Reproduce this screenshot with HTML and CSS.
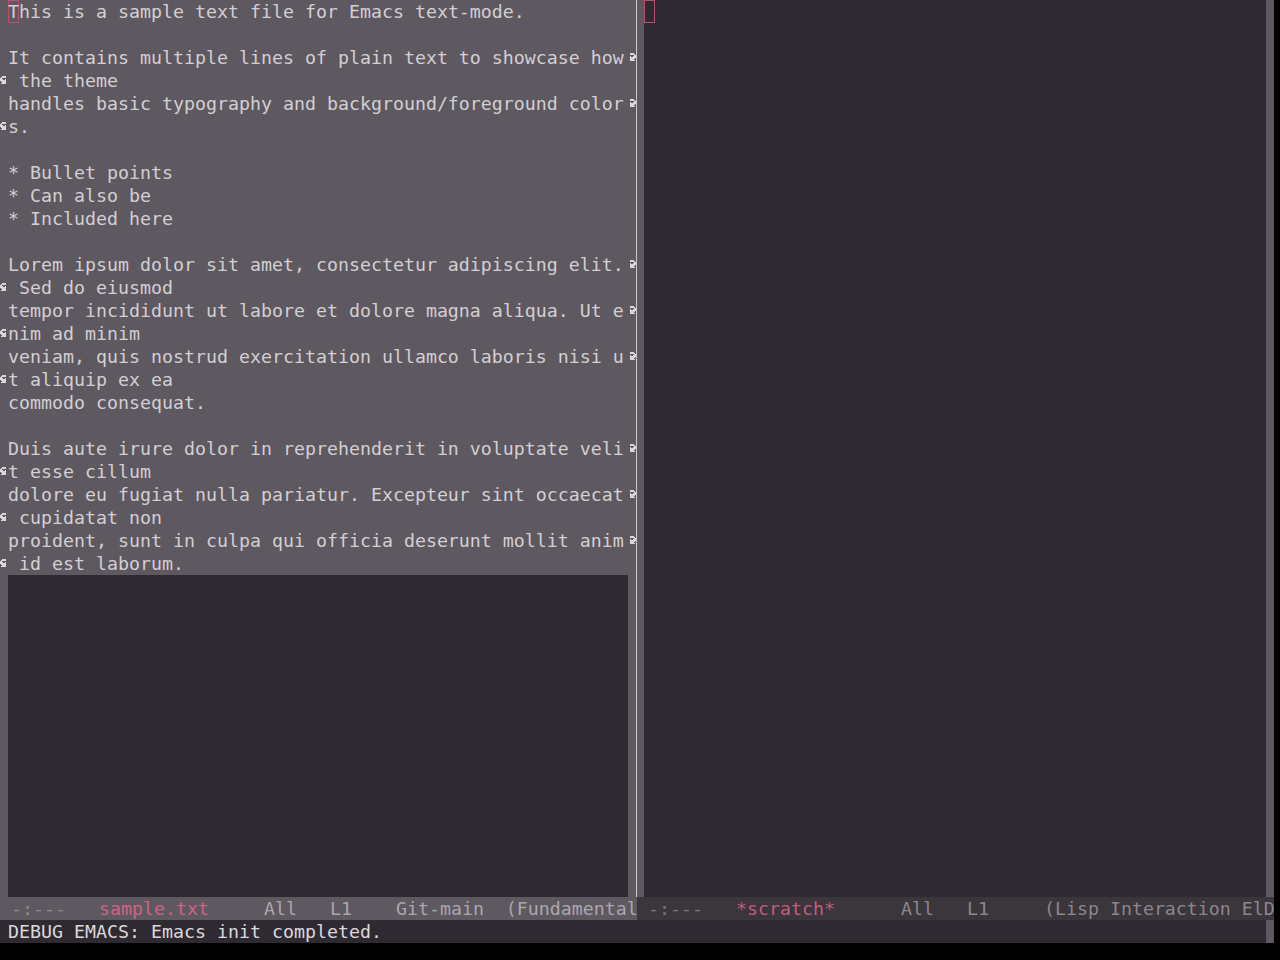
FILE: index.html
```html
<!DOCTYPE html>
<html>
<head>
<meta charset="utf-8">
<title>Emacs</title>
<link rel="stylesheet" href="styles.css">
</head>
<body>
<div class="frame">
  <div class="windows">
    <div class="win win-left">
      <div class="win-body">
        <div class="pane">
          <div class="buf">
            <div class="line"><span class="fringe"></span><span class="text"><span class="cursor">T</span>his is a sample text file for Emacs text-mode.</span><span class="fringe"></span></div>
            <div class="line"><span class="fringe"></span><span class="text"></span><span class="fringe"></span></div>
            <div class="line"><span class="fringe"></span><span class="text">It contains multiple lines of plain text to showcase how</span><span class="fringe"><svg class="glyph" viewBox="0 0 8 8"><path d="M2 0h4v1h-4zM2 1h5v1h-5zM6 2h2v1h-2zM2 3h1v1h-1zM5 3h3v1h-3zM2 4h6v1h-6zM2 5h5v1h-5zM2 6h4v1h-4zM2 7h5v1h-5z"/></svg></span></div>
            <div class="line"><span class="fringe"><svg class="glyph" viewBox="0 0 8 8"><path d="M2 0h4v1h-4zM1 1h5v1h-5zM0 2h2v1h-2zM0 3h3v1h-3zM5 3h1v1h-1zM0 4h6v1h-6zM1 5h5v1h-5zM2 6h4v1h-4zM1 7h5v1h-5z"/></svg></span><span class="text"> the theme</span><span class="fringe"></span></div>
            <div class="line"><span class="fringe"></span><span class="text">handles basic typography and background/foreground color</span><span class="fringe"><svg class="glyph" viewBox="0 0 8 8"><path d="M2 0h4v1h-4zM2 1h5v1h-5zM6 2h2v1h-2zM2 3h1v1h-1zM5 3h3v1h-3zM2 4h6v1h-6zM2 5h5v1h-5zM2 6h4v1h-4zM2 7h5v1h-5z"/></svg></span></div>
            <div class="line"><span class="fringe"><svg class="glyph" viewBox="0 0 8 8"><path d="M2 0h4v1h-4zM1 1h5v1h-5zM0 2h2v1h-2zM0 3h3v1h-3zM5 3h1v1h-1zM0 4h6v1h-6zM1 5h5v1h-5zM2 6h4v1h-4zM1 7h5v1h-5z"/></svg></span><span class="text">s.</span><span class="fringe"></span></div>
            <div class="line"><span class="fringe"></span><span class="text"></span><span class="fringe"></span></div>
            <div class="line"><span class="fringe"></span><span class="text">* Bullet points</span><span class="fringe"></span></div>
            <div class="line"><span class="fringe"></span><span class="text">* Can also be</span><span class="fringe"></span></div>
            <div class="line"><span class="fringe"></span><span class="text">* Included here</span><span class="fringe"></span></div>
            <div class="line"><span class="fringe"></span><span class="text"></span><span class="fringe"></span></div>
            <div class="line"><span class="fringe"></span><span class="text">Lorem ipsum dolor sit amet, consectetur adipiscing elit.</span><span class="fringe"><svg class="glyph" viewBox="0 0 8 8"><path d="M2 0h4v1h-4zM2 1h5v1h-5zM6 2h2v1h-2zM2 3h1v1h-1zM5 3h3v1h-3zM2 4h6v1h-6zM2 5h5v1h-5zM2 6h4v1h-4zM2 7h5v1h-5z"/></svg></span></div>
            <div class="line"><span class="fringe"><svg class="glyph" viewBox="0 0 8 8"><path d="M2 0h4v1h-4zM1 1h5v1h-5zM0 2h2v1h-2zM0 3h3v1h-3zM5 3h1v1h-1zM0 4h6v1h-6zM1 5h5v1h-5zM2 6h4v1h-4zM1 7h5v1h-5z"/></svg></span><span class="text"> Sed do eiusmod</span><span class="fringe"></span></div>
            <div class="line"><span class="fringe"></span><span class="text">tempor incididunt ut labore et dolore magna aliqua. Ut e</span><span class="fringe"><svg class="glyph" viewBox="0 0 8 8"><path d="M2 0h4v1h-4zM2 1h5v1h-5zM6 2h2v1h-2zM2 3h1v1h-1zM5 3h3v1h-3zM2 4h6v1h-6zM2 5h5v1h-5zM2 6h4v1h-4zM2 7h5v1h-5z"/></svg></span></div>
            <div class="line"><span class="fringe"><svg class="glyph" viewBox="0 0 8 8"><path d="M2 0h4v1h-4zM1 1h5v1h-5zM0 2h2v1h-2zM0 3h3v1h-3zM5 3h1v1h-1zM0 4h6v1h-6zM1 5h5v1h-5zM2 6h4v1h-4zM1 7h5v1h-5z"/></svg></span><span class="text">nim ad minim</span><span class="fringe"></span></div>
            <div class="line"><span class="fringe"></span><span class="text">veniam, quis nostrud exercitation ullamco laboris nisi u</span><span class="fringe"><svg class="glyph" viewBox="0 0 8 8"><path d="M2 0h4v1h-4zM2 1h5v1h-5zM6 2h2v1h-2zM2 3h1v1h-1zM5 3h3v1h-3zM2 4h6v1h-6zM2 5h5v1h-5zM2 6h4v1h-4zM2 7h5v1h-5z"/></svg></span></div>
            <div class="line"><span class="fringe"><svg class="glyph" viewBox="0 0 8 8"><path d="M2 0h4v1h-4zM1 1h5v1h-5zM0 2h2v1h-2zM0 3h3v1h-3zM5 3h1v1h-1zM0 4h6v1h-6zM1 5h5v1h-5zM2 6h4v1h-4zM1 7h5v1h-5z"/></svg></span><span class="text">t aliquip ex ea</span><span class="fringe"></span></div>
            <div class="line"><span class="fringe"></span><span class="text">commodo consequat.</span><span class="fringe"></span></div>
            <div class="line"><span class="fringe"></span><span class="text"></span><span class="fringe"></span></div>
            <div class="line"><span class="fringe"></span><span class="text">Duis aute irure dolor in reprehenderit in voluptate veli</span><span class="fringe"><svg class="glyph" viewBox="0 0 8 8"><path d="M2 0h4v1h-4zM2 1h5v1h-5zM6 2h2v1h-2zM2 3h1v1h-1zM5 3h3v1h-3zM2 4h6v1h-6zM2 5h5v1h-5zM2 6h4v1h-4zM2 7h5v1h-5z"/></svg></span></div>
            <div class="line"><span class="fringe"><svg class="glyph" viewBox="0 0 8 8"><path d="M2 0h4v1h-4zM1 1h5v1h-5zM0 2h2v1h-2zM0 3h3v1h-3zM5 3h1v1h-1zM0 4h6v1h-6zM1 5h5v1h-5zM2 6h4v1h-4zM1 7h5v1h-5z"/></svg></span><span class="text">t esse cillum</span><span class="fringe"></span></div>
            <div class="line"><span class="fringe"></span><span class="text">dolore eu fugiat nulla pariatur. Excepteur sint occaecat</span><span class="fringe"><svg class="glyph" viewBox="0 0 8 8"><path d="M2 0h4v1h-4zM2 1h5v1h-5zM6 2h2v1h-2zM2 3h1v1h-1zM5 3h3v1h-3zM2 4h6v1h-6zM2 5h5v1h-5zM2 6h4v1h-4zM2 7h5v1h-5z"/></svg></span></div>
            <div class="line"><span class="fringe"><svg class="glyph" viewBox="0 0 8 8"><path d="M2 0h4v1h-4zM1 1h5v1h-5zM0 2h2v1h-2zM0 3h3v1h-3zM5 3h1v1h-1zM0 4h6v1h-6zM1 5h5v1h-5zM2 6h4v1h-4zM1 7h5v1h-5z"/></svg></span><span class="text"> cupidatat non</span><span class="fringe"></span></div>
            <div class="line"><span class="fringe"></span><span class="text">proident, sunt in culpa qui officia deserunt mollit anim</span><span class="fringe"><svg class="glyph" viewBox="0 0 8 8"><path d="M2 0h4v1h-4zM2 1h5v1h-5zM6 2h2v1h-2zM2 3h1v1h-1zM5 3h3v1h-3zM2 4h6v1h-6zM2 5h5v1h-5zM2 6h4v1h-4zM2 7h5v1h-5z"/></svg></span></div>
            <div class="line"><span class="fringe"><svg class="glyph" viewBox="0 0 8 8"><path d="M2 0h4v1h-4zM1 1h5v1h-5zM0 2h2v1h-2zM0 3h3v1h-3zM5 3h1v1h-1zM0 4h6v1h-6zM1 5h5v1h-5zM2 6h4v1h-4zM1 7h5v1h-5z"/></svg></span><span class="text"> id est laborum.</span><span class="fringe"></span></div>
          </div>
          <div class="filler"><span class="fringe"></span><span class="void"></span><span class="fringe"></span></div>
        </div>
        <div class="divider"></div>
      </div>
      <div class="modeline active"><span class="ml-flag"> -:---   </span><span class="ml-buf">sample.txt</span><span class="ml-info">     All   L1    Git-main  (Fundamental</span></div>
    </div>
    <div class="win win-right">
      <div class="win-body">
        <span class="fringe fringe-narrow"></span>
        <div class="rtext"><div class="rline"><span class="cursor">&nbsp;</span></div></div>
        <span class="fringe"></span>
      </div>
      <div class="modeline inactive"><span class="ml-flag"> -:---   </span><span class="ml-buf">*scratch*</span><span class="ml-info">      All   L1     (Lisp Interaction ElD</span></div>
    </div>
  </div>
  <div class="echo"><span class="echo-text">DEBUG EMACS: Emacs init completed.</span><span class="fringe"></span></div>
</div>
</body>
</html>
```
FILE: styles.css
```css
html, body {
  margin: 0;
  padding: 0;
  background: #000000;
}

.frame {
  width: 1274px;
  height: 943px;
  display: flex;
  flex-direction: column;
  background: #2f2a31;
  font-family: "DejaVu Sans Mono", "Liberation Mono", monospace;
  font-size: 18.27px;
  line-height: 23px;
  color: #d3cfd3;
}

.windows {
  display: flex;
  height: 920px;
}

.win {
  display: flex;
  flex-direction: column;
}

.win-left {
  width: 637px;
}

.win-right {
  width: 637px;
}

.win-body {
  display: flex;
  height: 897px;
}

.pane {
  width: 636px;
  display: flex;
  flex-direction: column;
}

.buf {
  display: flex;
  flex-direction: column;
  background: #5e5860;
}

.line {
  display: flex;
  height: 23px;
}

.fringe {
  display: flex;
  align-items: flex-start;
  justify-content: center;
  flex: 0 0 8px;
  width: 8px;
  background: #5e5860;
}

.fringe-narrow {
  flex: 0 0 7px;
  width: 7px;
}

.glyph {
  width: 8px;
  height: 8px;
  margin-top: 7px;
  fill: #dad6da;
  shape-rendering: crispEdges;
}

.text {
  width: 620px;
  flex: 0 0 620px;
  white-space: pre;
  overflow: hidden;
}

.cursor {
  display: inline-block;
  height: 23px;
  vertical-align: top;
  box-shadow: inset 0 0 0 1px #b9506c;
}

.filler {
  flex: 1;
  display: flex;
}

.void {
  flex: 0 0 620px;
  background: #2f2a31;
}

.divider {
  width: 1px;
  background: #cbc7cb;
}

.rtext {
  flex: 1;
  white-space: pre;
  background: #2f2a31;
}

.rline {
  height: 23px;
}

.modeline {
  height: 23px;
  white-space: pre;
  overflow: hidden;
}

.modeline.active {
  background: #5e5860;
}

.modeline.active .ml-flag {
  color: #8f8991;
}

.modeline.active .ml-buf {
  color: #cf6384;
}

.modeline.active .ml-info {
  color: #aca6ad;
}

.modeline.inactive {
  background: #3b353c;
}

.modeline.inactive .ml-flag {
  color: #7d777f;
}

.modeline.inactive .ml-buf {
  color: #c25c7b;
}

.modeline.inactive .ml-info {
  color: #8c868d;
}

.echo {
  display: flex;
  height: 23px;
  background: #2f2a31;
}

.echo-text {
  flex: 1;
  padding-left: 8px;
  white-space: pre;
  color: #dcd8dc;
}
```
